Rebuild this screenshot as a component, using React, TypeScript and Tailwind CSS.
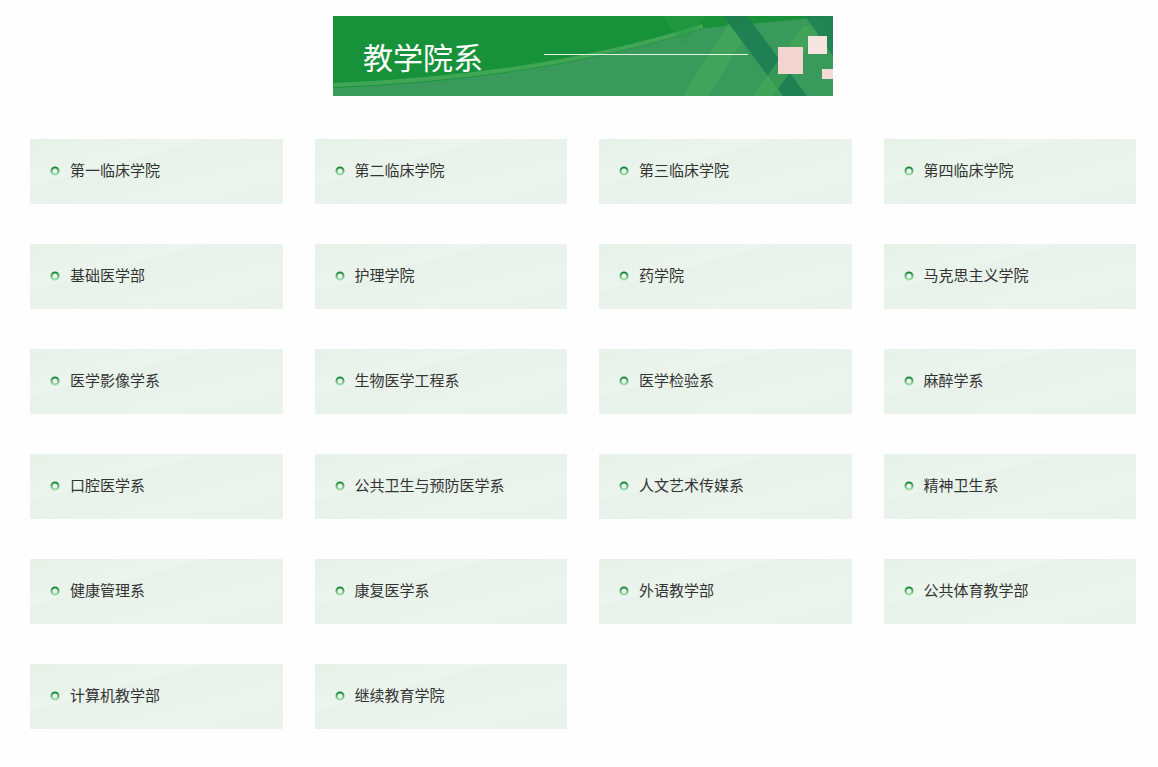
import React from 'react';

const items = [
  '第一临床学院', '第二临床学院', '第三临床学院', '第四临床学院',
  '基础医学部', '护理学院', '药学院', '马克思主义学院',
  '医学影像学系', '生物医学工程系', '医学检验系', '麻醉学系',
  '口腔医学系', '公共卫生与预防医学系', '人文艺术传媒系', '精神卫生系',
  '健康管理系', '康复医学系', '外语教学部', '公共体育教学部',
  '计算机教学部', '继续教育学院',
];

const Ring = () => (
  <svg width="10" height="10" viewBox="0 0 10 10" className="shrink-0">
    <defs>
      <linearGradient id="ringG" x1="0" y1="0" x2="0" y2="1">
        <stop offset="0" stopColor="#178a37" />
        <stop offset="1" stopColor="#9fdcab" />
      </linearGradient>
    </defs>
    <circle cx="5" cy="5" r="3.5" fill="none" stroke="url(#ringG)" strokeWidth="2" />
  </svg>
);

const Banner = () => (
  <div className="relative ml-[333px] w-[500px] h-[80px] overflow-hidden bg-[#17923b]">
    {/* background drawing */}
    <svg className="absolute inset-0" width="500" height="80" viewBox="0 0 500 80">
      <path d="M0,72 Q210,64 372,12 L500,0 L500,80 L0,80 Z" fill="#3a9a5b" />
      <path d="M0,69 Q210,61 370,10" fill="none" stroke="#4bab5c" strokeWidth="4" opacity="0.8" />
      <polygon points="350,80 395,8 420,8 375,80" fill="#46a85a" opacity="0.7" />
      <polygon points="390,0 414,0 474,80 450,80" fill="#1d7e52" opacity="0.9" />
      <polygon points="420,80 470,10 490,10 440,80" fill="#45aa55" opacity="0.6" />
      <polygon points="472,0 500,0 500,40" fill="#1d7e52" opacity="0.8" />
      <polygon points="330,0 372,0 350,30" fill="#2a9a48" opacity="0.5" />
      <rect x="445" y="31" width="25" height="27" fill="#f2d5d0" />
      <rect x="475" y="20" width="19" height="18" fill="#f5e4df" />
      <rect x="489" y="53" width="11" height="10" fill="#f4dcd6" />
    </svg>
    <div className="relative flex h-full items-center pl-[30px]">
      <span className="text-[30px] leading-none text-white font-['Noto_Sans_CJK_SC',sans-serif]">
        教学院系
      </span>
      <div className="ml-[61px] mb-[3px] h-px w-[204px] bg-[#e6f2e6]" />
    </div>
  </div>
);

export default function App() {
  return (
    <div className="min-h-screen bg-[#fefefe] pt-4 font-['Noto_Sans_CJK_SC',sans-serif]">
      <Banner />
      <div className="ml-[30px] mt-[43px] grid w-[1106px] grid-cols-4 gap-x-[32px] gap-y-[40px] pb-10">
        {items.map((name) => (
          <div
            key={name}
            className="flex h-[65px] items-center gap-[10px] pl-[20px] pb-[2px] bg-[#e8f2ea] bg-[linear-gradient(165deg,#e6f1e8_0%,#ebf4ed_35%,#e8f2ea_36%,#eaf3ec_70%,#e9f2eb_100%)]"
          >
            <Ring />
            <span className="text-[15px] text-[#333333]">{name}</span>
          </div>
        ))}
      </div>
    </div>
  );
}
